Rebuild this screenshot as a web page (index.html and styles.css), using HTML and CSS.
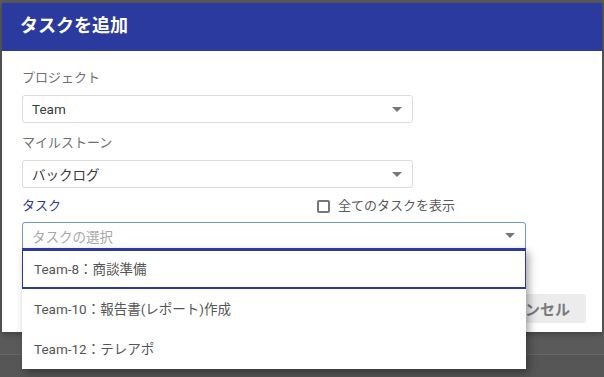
FILE: index.html
```html
<!DOCTYPE html>
<html>
	<head>
		<meta charset="utf-8">
		<meta name="viewport" content="width=device-width, initial-scale=1.0">
		<link rel="stylesheet" href="styles.css">
	</head>
	<body>
		<div class="backdrop">
			<div class="dialog">
				<header class="dialog-header">タスクを追加</header>
				<div class="dialog-body">
					<div class="field">
						<div class="field-label">プロジェクト</div>
						<div class="select select-short">
							<span class="select-value">Team</span>
							<span class="caret"></span>
						</div>
					</div>
					<div class="field field-2">
						<div class="field-label">マイルストーン</div>
						<div class="select select-short">
							<span class="select-value">バックログ</span>
							<span class="caret"></span>
						</div>
					</div>
					<div class="field field-3">
						<div class="field-label label-row">
							<span class="label-active">タスク</span>
							<label class="check"><span class="check-box"></span>全てのタスクを表示</label>
						</div>
						<div class="select select-wide select-focus">
							<span class="select-placeholder">タスクの選択</span>
							<span class="caret"></span>
							<!-- open dropdown -->
							<ul class="menu">
								<li class="menu-item menu-item-active">Team-8：商談準備</li>
								<li class="menu-item">Team-10：報告書(レポート)作成</li>
								<li class="menu-item">Team-12：テレアポ</li>
							</ul>
						</div>
					</div>
					<div class="buttons">
						<button class="btn btn-primary">追加</button>
						<button class="btn btn-cancel">キャンセル</button>
					</div>
				</div>
			</div>
			<div class="page-bottom"></div>
		</div>
	</body>
</html>
```

FILE: styles.css
```css
* {
	margin:0;
	padding:0;
	box-sizing: border-box;
}
body {
	width:604px;
	height:377px;
	overflow:hidden;
	font-family: "Roboto", "Noto Sans CJK JP", sans-serif;
	font-size:13px;
	background-color:#5a5a5a;
}
.backdrop {
	height:377px;
	padding-top:3px;
	background-color:#5a5a5a;
}
.dialog {
	display:flex;
	flex-direction:column;
	width:600px;
	height:329px;
	margin-left:2px;
	background-color:#fff;
	box-shadow:0 2px 6px rgba(0,0,0,0.3);
}
.dialog-header {
	flex:none;
	height:48px;
	padding-left:18px;
	line-height:46px;
	background-color:#2b3a9f;
	color:#fff;
	font-size:18px;
	font-weight:bold;
}
.dialog-body {
	flex:auto;
	display:flex;
	flex-direction:column;
	padding:17px 16px 9px 20px;
}
.field-label {
	height:20px;
	line-height:20px;
	margin-bottom:7px;
	color:#707070;
	font-size:13px;
}
.field-2 {
	margin-top:10px;
}
.field-3 {
	margin-top:8px;
}
.field-3 .field-label {
	margin-bottom:6px;
}
.label-row {
	display:grid;
	grid-template-columns:295px auto;
	align-items:center;
}
.label-active {
	color:#2b3a9f;
}
.check {
	display:flex;
	align-items:center;
	color:#5a5a5a;
}
.check-box {
	width:13px;
	height:13px;
	margin-right:8px;
	border:2px solid #777;
	border-radius:2px;
}
.select {
	position:relative;
	display:flex;
	align-items:center;
	height:28px;
	padding:0 10px 0 9px;
	border:1px solid #dcdcdc;
	border-radius:3px;
	color:#3a3a3a;
	font-size:13.5px;
}
.select-short {
	width:391px;
}
.select-wide {
	width:504px;
	height:27px;
	border-color:#6f98cc;
	border-radius:3px 3px 0 0;
}
.select-value,
.select-placeholder {
	flex:auto;
}
.select-placeholder {
	color:#a8a8a8;
}
.caret {
	flex:none;
	width:0;
	height:0;
	border-left:5px solid transparent;
	border-right:5px solid transparent;
	border-top:5px solid #777;
}
.menu {
	position:absolute;
	top:25px;
	left:-1px;
	width:504px;
	list-style:none;
	background-color:#fff;
	box-shadow:3px 4px 8px rgba(0,0,0,0.35);
	z-index:2;
}
.menu-item {
	height:40px;
	line-height:40px;
	padding-left:12px;
	color:#555;
	font-size:13.5px;
}
.menu-item-active {
	height:41px;
	line-height:36px;
	border:1px solid #2b3a9f;
	border-top:3px solid #2b3a9f;
	border-bottom-width:2px;
	padding-left:11px;
}
.buttons {
	display:flex;
	justify-content:flex-end;
	gap:8px;
	margin-top:auto;
}
.btn {
	height:29px;
	padding:0 16px;
	border:none;
	border-radius:3px;
	font-family: "Roboto", "Noto Sans CJK JP", sans-serif;
	font-size:15px;
	font-weight:bold;
}
.btn-primary {
	background-color:#2b3a9f;
	color:#fff;
}
.btn-cancel {
	background-color:#ececec;
	color:#7a7a7a;
}
.page-bottom {
	height:23px;
	margin-top:22px;
	border-top:1px solid #666;
	background-color:#565656;
}
```
